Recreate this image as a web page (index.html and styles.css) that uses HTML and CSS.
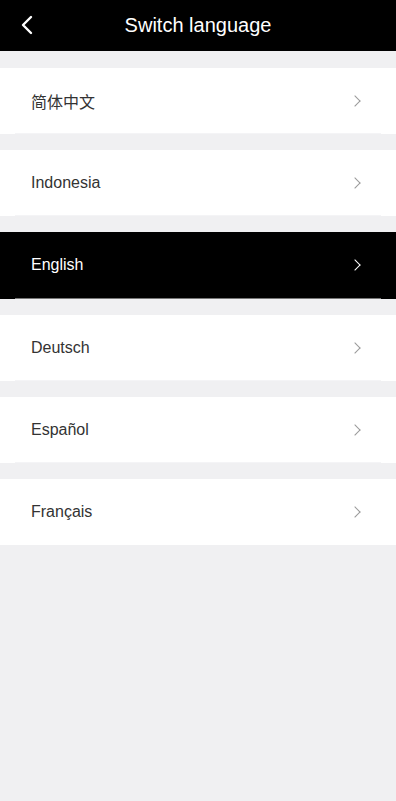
FILE: index.html
```html
<!DOCTYPE html>
<html lang="en">
<head>
    <meta charset="UTF-8">
    <meta name="viewport" content="width=device-width, initial-scale=1.0">
    <title>Switch language</title>
    <link rel="stylesheet" href="styles.css">
</head>
<body>
    <div class="header">
        <svg class="back" width="12" height="20" viewBox="0 0 12 20">
            <path d="M10 2 L2 10 L10 18" fill="none" stroke="#fff" stroke-width="2.4" stroke-linecap="round" stroke-linejoin="round"/>
        </svg>
        <h1>Switch language</h1>
    </div>

    <div class="lang-list">
        <div class="lang-item"><span class="lang-name">简体中文</span><span class="arrow"></span></div>
        <div class="lang-item"><span class="lang-name">Indonesia</span><span class="arrow"></span></div>
        <div class="lang-item active"><span class="lang-name">English</span><span class="arrow"></span></div>
        <div class="lang-item"><span class="lang-name">Deutsch</span><span class="arrow"></span></div>
        <div class="lang-item"><span class="lang-name">Español</span><span class="arrow"></span></div>
        <div class="lang-item last"><span class="lang-name">Français</span><span class="arrow"></span></div>
    </div>
</body>
</html>
```

FILE: styles.css
```css
body {
    margin: 0;
    min-height: 801px;
    background: #f0f0f2;
    font-family: "Liberation Sans", Arial, "Noto Sans CJK SC", sans-serif;
}

.header {
    position: relative;
    height: 51px;
    background: #000;
    display: flex;
    align-items: center;
    justify-content: center;
}

.back {
    position: absolute;
    left: 21px;
    top: 15px;
}

.header h1 {
    margin: 0;
    color: #fff;
    font-size: 20px;
    font-weight: normal;
}

.lang-list {
    display: grid;
    gap: 16px;
    padding-top: 17px;
}

.lang-item {
    position: relative;
    box-sizing: border-box;
    height: 66.2px;
    background: #fff;
    display: flex;
    align-items: center;
    justify-content: space-between;
    padding: 0 31px;
}

.lang-item::after {
    content: "";
    position: absolute;
    left: 15px;
    right: 15px;
    bottom: 0;
    height: 1px;
    background: #f4f4f6;
}

.lang-item.last::after {
    display: none;
}

.lang-name {
    font-size: 16px;
    color: #333;
}

.arrow {
    width: 7px;
    height: 7px;
    margin-right: 6px;
    border-top: 1.5px solid #999;
    border-right: 1.5px solid #999;
    transform: rotate(45deg);
}

.lang-item.active {
    background: #000;
}

.lang-item.active::after {
    background: #777;
}

.lang-item.active .lang-name {
    color: #fff;
}

.lang-item.active .arrow {
    border-color: #fff;
}
```
